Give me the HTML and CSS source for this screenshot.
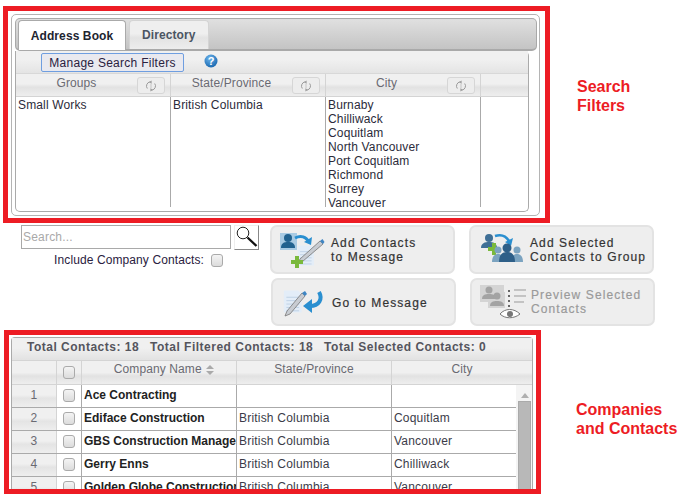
FILE: index.html
```html
<!DOCTYPE html>
<html lang="en">
<head>
<meta charset="utf-8">
<title>Contacts</title>
<link rel="stylesheet" href="styles.css">
</head>
<body>
<svg class="defs" width="0" height="0" aria-hidden="true">
  <symbol id="sync" viewBox="0 0 12 12">
    <path d="M2.300 8.500A4.200 4.200 0 0 1 5 1.900M9.700 3.500A4.200 4.200 0 0 1 7 10.100" fill="none" stroke="#999" stroke-width="1"/>
    <path d="M6.600 .4v3.400L4.200 2.100zM5.400 11.600V8.200L7.800 9.900z" fill="#999"/>
    <path d="M6 3.500v5" stroke="#bbb" stroke-width=".8"/>
  </symbol>
  <symbol id="doc" viewBox="0 0 26 28">
    <path d="M1 1h17l4 4v22H1z" fill="#e3edf8"/>
    <path d="M4 9h15M4 13h15M4 17h15M4 21h15M4 25h15" stroke="#b9cde3" stroke-width="1"/>
  </symbol>
</svg>

<div class="row-top">
  <section class="frame frame-filters">
    <div class="panel">
      <div class="tabbar">
        <button class="tab tab-on">Address Book</button>
        <button class="tab">Directory</button>
      </div>
      <div class="filters">
        <div class="toolbar">
          <button class="manage">Manage Search Filters</button>
          <svg class="help" viewBox="0 0 14 14" width="14" height="14"><defs><radialGradient id="hg" cx=".4" cy=".3" r=".8"><stop offset="0" stop-color="#6db4ec"/><stop offset="1" stop-color="#0f5fa8"/></radialGradient></defs><circle cx="7" cy="7" r="6.500" fill="url(#hg)"/><text x="7" y="11" class="help-q">?</text></svg>
        </div>
        <div class="fhead">
          <div class="fh"><span>Groups</span><button class="syncbtn"><svg width="12" height="12"><use href="#sync"/></svg></button></div>
          <div class="fh"><span>State/Province</span><button class="syncbtn"><svg width="12" height="12"><use href="#sync"/></svg></button></div>
          <div class="fh"><span>City</span><button class="syncbtn"><svg width="12" height="12"><use href="#sync"/></svg></button></div>
          <div class="fh fh-last"></div>
        </div>
        <div class="fbody">
          <ul class="flist"><li>Small Works</li></ul>
          <ul class="flist"><li>British Columbia</li></ul>
          <ul class="flist"><li>Burnaby</li><li>Chilliwack</li><li>Coquitlam</li><li>North Vancouver</li><li>Port Coquitlam</li><li>Richmond</li><li>Surrey</li><li>Vancouver</li></ul>
          <ul class="flist flist-last"></ul>
        </div>
      </div>
    </div>
  </section>
  <div class="note note-a">Search<br>Filters</div>
</div>

<div class="row-mid">
  <div class="searchcol">
    <div class="searchline">
      <input class="search" placeholder="Search...">
      <button class="searchbtn"><svg viewBox="0 0 23 23" width="23" height="23"><circle cx="8" cy="7" r="5.800" fill="#fff" stroke="#222" stroke-width="1"/><path d="M12.500 11.500l9 8.500" stroke="#111" stroke-width="2.400"/></svg></button>
    </div>
    <label class="incl">Include Company Contacts:<span class="cb cb-incl"></span></label>
  </div>
  <div class="actions">
    <button class="act">
      <svg class="ico" viewBox="0 0 46 36" width="46" height="36"><rect x="0" y="1" width="17" height="17" fill="#a9cbe3"/><circle cx="8" cy="6" r="4" fill="#21628f"/><path d="M1 16c0-5 3-6 7-6s7 1 7 6z" fill="#21628f"/><path d="M15 6c6-3 11-1 14 4" fill="none" stroke="#2a8fd0" stroke-width="3"/><path d="M32 5l-1 8-7-3z" fill="#2a8fd0"/><g transform="translate(17 12)"><use href="#doc" width="20" height="23"/></g><path d="M20 27l-2 4 4.500-1.500L43 12l-3-3z" fill="#c8ccd2" stroke="#777" stroke-width=".8"/><path d="M40 9l3 3 1.500-2-2-3z" fill="#3f86c4"/><path d="M15 24h4v4h4v4h-4v4h-4v-4h-4v-4h4z" fill="#7ab93c"/></svg>
      <span class="lbl">Add Contacts<br>to Message</span>
    </button>
    <button class="act">
      <svg class="ico" viewBox="0 0 46 36" width="46" height="36"><circle cx="10" cy="6" r="4" fill="#3f6f96"/><path d="M2 16c0-5 4-6 8-6s8 1 8 6z" fill="#3f6f96"/><path d="M16 4c6-2 11 0 14 5" fill="none" stroke="#2a8fd0" stroke-width="2.500"/><path d="M34 6l-2 8-6-4z" fill="#2a8fd0"/><path d="M13 11h4v4h4v4h-4v4h-4v-4H9v-4h4z" fill="#7ab93c"/><circle cx="19" cy="18" r="3.500" fill="#7ba3c0"/><path d="M13 30c0-6 3-8 6-8s6 2 6 8z" fill="#7ba3c0"/><circle cx="38" cy="18" r="3.500" fill="#7ba3c0"/><path d="M32 30c0-6 3-8 6-8s6 2 6 8z" fill="#7ba3c0"/><circle cx="28" cy="16" r="4.500" fill="#2e5f88"/><path d="M20 30c0-8 4-10 8-10s8 2 8 10z" fill="#2e5f88"/></svg>
      <span class="lbl">Add Selected<br>Contacts to Group</span>
    </button>
    <button class="act act-low">
      <svg class="ico" viewBox="0 0 46 36" width="46" height="36"><g transform="translate(2 3)"><use href="#doc" width="22" height="29"/></g><path d="M6 27l-2 5 5-2 15-18-3-3z" fill="#c8ccd2" stroke="#777" stroke-width=".8"/><path d="M21 9l3 3 2-2-2-3z" fill="#3f86c4"/><path d="M38 8c4 7 0 14-9 14" fill="none" stroke="#2a8fd0" stroke-width="4"/><path d="M31 15v14l-9-7z" fill="#2a8fd0"/></svg>
      <span class="lbl lbl-one">Go to Message</span>
    </button>
    <button class="act act-low act-off">
      <svg class="ico" viewBox="0 0 46 36" width="46" height="36"><rect x="0" y="1" width="24" height="17" fill="#d4d4d4"/><rect x="8" y="8" width="17" height="16" fill="#d4d4d4"/><circle cx="9" cy="6" r="3.500" fill="#a3a3a3"/><path d="M2 15c0-4 3-5 7-5s7 1 7 5z" fill="#a3a3a3"/><circle cx="17" cy="12" r="3.500" fill="#a3a3a3"/><path d="M10 22c0-4 3-5 7-5s7 1 7 5z" fill="#a3a3a3"/><path d="M29 6v2M29 11v2M29 16v2M29 21v2" stroke="#666" stroke-width="2"/><path d="M34 6h13M34 12h13M34 18h10" stroke="#999"/><path d="M20 30c5-6 14-6 20 0-6 5-15 5-20 0z" fill="#fff" stroke="#777"/><circle cx="30" cy="30" r="3" fill="#777"/></svg>
      <span class="lbl">Preview Selected<br>Contacts</span>
    </button>
  </div>
</div>

<div class="row-bot">
  <section class="frame frame-grid">
    <div class="gridwrap">
      <div class="totals">Total Contacts: 18 <i></i>Total Filtered Contacts: 18 <i></i>Total Selected Contacts: 0</div>
      <div class="ghead">
        <div class="gh"></div>
        <div class="gh"><span class="cb"></span></div>
        <div class="gh gh-co">Company Name <svg class="sort" viewBox="0 0 8 10" width="8" height="10"><path d="M4 0l4 4H0zM4 10L0 6h8z" fill="#aaa"/></svg></div>
        <div class="gh">State/Province</div>
        <div class="gh">City</div>
      </div>
      <div class="gbody">
        <div class="rows">
          <div class="gr"><div class="c c-n">1</div><div class="c c-k"><span class="cb"></span></div><div class="c c-b">Ace Contracting</div><div class="c"></div><div class="c"></div></div>
          <div class="gr"><div class="c c-n">2</div><div class="c c-k"><span class="cb"></span></div><div class="c c-b">Ediface Construction</div><div class="c">British Columbia</div><div class="c">Coquitlam</div></div>
          <div class="gr"><div class="c c-n">3</div><div class="c c-k"><span class="cb"></span></div><div class="c c-b">GBS Construction Management</div><div class="c">British Columbia</div><div class="c">Vancouver</div></div>
          <div class="gr"><div class="c c-n">4</div><div class="c c-k"><span class="cb"></span></div><div class="c c-b">Gerry Enns</div><div class="c">British Columbia</div><div class="c">Chilliwack</div></div>
          <div class="gr"><div class="c c-n">5</div><div class="c c-k"><span class="cb"></span></div><div class="c c-b">Golden Globe Construction</div><div class="c">British Columbia</div><div class="c">Vancouver</div></div>
        </div>
        <div class="scroll"><span class="arrow"></span><span class="thumb"></span></div>
      </div>
    </div>
  </section>
  <div class="note note-b">Companies<br>and Contacts</div>
</div>
</body>
</html>
```

FILE: styles.css
```css
* { box-sizing: border-box; }
html, body { margin: 0; height: 504px; overflow: hidden; background: #fff; }
body { font: 12px/14px "Liberation Sans", Arial, sans-serif; color: #222; letter-spacing: .1px; }
.defs { position: absolute; }
button { font: inherit; letter-spacing: inherit; margin: 0; }
ul { list-style: none; margin: 0; padding: 0; }

.row-top { display: flex; align-items: flex-start; padding: 6px 0 0 3px; }
.frame { border: 5px solid #ed1c24; background: #fff; }
.frame-filters { width: 547px; height: 217px; padding: 3px; flex: none; }
.note { color: #ed1c24; font-weight: 700; font-size: 16px; line-height: 19px; letter-spacing: 0; }
.note-a { margin: 71px 0 0 27px; }
.note-b { margin: 70px 0 0 35px; }

.panel { height: 202px; width: 529px; border: 1px solid #b4b4b4; border-radius: 5px; padding: 3px; }
.tabbar { height: 33px; width: 522px; display: flex; gap: 3px; align-items: flex-end; padding-left: 2px;
  border: 1px solid #a9a9a9; border-bottom-width: 2px; border-radius: 5px; background: linear-gradient(#e0e0e0, #c4c4c4); }
.tab { height: 29px; padding: 0 12px; border: 1px solid #d4d4d4; border-bottom: 0; border-radius: 4px 4px 0 0; color: #4b5563; font-weight: 700;
  background: linear-gradient(#efefef 45%, #e3e3e3 60%, #ededed); letter-spacing: .1px; }
.tab-on { width: 108px; padding: 0; background: #fff; border-color: #aaa; color: #1d2430; margin-bottom: -1px; height: 30px; }
.filters { width: 514px; height: 161px; border: 1px solid #aaa; border-top: 0; border-radius: 0 5px 5px 5px; }
.toolbar { height: 23px; display: flex; align-items: flex-start; padding-left: 25px; gap: 20px; background: linear-gradient(#f0f0f0 40%, #e4e4e4); border-bottom: 1px solid #d8d8d8; }
.manage { width: 143px; height: 19px; padding: 0; margin-top: 2px; border: 1px solid #6f9ee0; background: #e9e9ef; color: #2a2140; border-radius: 2px; letter-spacing: .27px; }
.help { margin-top: 3px; }
.help-q { font-size: 11px; font-weight: 700; fill: #fff; text-anchor: middle; letter-spacing: 0; }
.fhead { display: grid; grid-template-columns: 155px 155px 155px 1fr; height: 23px; background: linear-gradient(#f0f0f0 45%, #e2e2e2 60%, #eee); border-bottom: 1px solid #d4d4d4; }
.fh { color: #6a6a72; border-right: 1px solid #d4d4d4; padding: 2px 0 0 0; display: flex; }
.fh span { flex: 1; text-align: center; }
.fh-last { border: 0; }
.syncbtn { width: 28px; height: 17px; margin: 1px 5px 0 0; padding: 0; border: 1px solid #d6d6d6; border-radius: 3px; background: #ededed; display: flex; align-items: center; justify-content: center; flex: none; }
.fbody { display: grid; grid-template-columns: 155px 155px 155px 1fr; grid-template-rows: 110px; height: 110px; letter-spacing: .15px; }
.flist { height: 110px; border-right: 1px solid #aaa; padding: 1px 0 0 2px; color: #2b2b3a; }
.flist-last { border: 0; }
.flist li { height: 14px; }

.row-mid { display: flex; padding: 2px 0 0 21px; height: 107px; }
.searchcol { width: 249px; flex: none; }
.searchline { display: flex; align-items: flex-start; gap: 3px; }
.search { width: 210px; height: 24px; border: 1px solid #a9a9a9; padding: 0 1px; font: inherit; letter-spacing: .2px; background: #fff; }
.search::placeholder { color: #a9a9a9; opacity: 1; }
.searchbtn { width: 25px; height: 25px; padding: 0; border: 1px solid; border-color: #eee #888 #888 #eee; background: #fff; display: flex; }
.incl { display: flex; justify-content: flex-end; align-items: center; gap: 7px; margin: 3px 0 0; height: 14px; padding-right: 47px; color: #2a2140; }
.cb { display: inline-block; width: 12px; height: 13px; border: 1px solid #aaa; border-radius: 3px; background: linear-gradient(#f4f4f4, #dcdcdc); }
.actions { display: grid; grid-template-columns: 185px 185px; grid-template-rows: 49px 48px; column-gap: 14px; row-gap: 4px; }
.act { display: flex; align-items: center; gap: 5px; padding: 0 0 0 8px; border: 2px solid #e3e3e3; border-radius: 7px; background: #eee; color: #333; text-align: left; letter-spacing: 1.1px; line-height: 14px; -webkit-text-stroke: .2px #333; }
.act-low { margin: 0 -1px 0 1px; }
.lbl-one { margin-top: 2px; }
.act-off { color: #9a9a9a; -webkit-text-stroke: .2px #9a9a9a; }
.ico { flex: none; }

.row-bot { display: flex; align-items: flex-start; padding: 0 0 0 4px; }
.frame-grid { width: 537px; height: 164px; padding: 2px 3px 0 2px; overflow: hidden; flex: none; }
.gridwrap { height: 170px; border: 1px solid #aaa; border-bottom: 0; border-radius: 4px 4px 0 0; }
.totals { height: 23px; padding: 1px 0 0 15px; font-weight: 700; color: #55555d; line-height: 16px; background: linear-gradient(#f0f0f0 45%, #e2e2e2); border-bottom: 1px solid #d4d4d4; letter-spacing: .5px; white-space: nowrap; }
.totals i { display: inline-block; width: 7px; }
.ghead { display: grid; grid-template-columns: 45px 25px 155px 155px 1fr; height: 24px; background: linear-gradient(#f0f0f0 50%, #e2e2e2 65%, #eee); border-bottom: 1px solid #d4d4d4; }
.gh { border-right: 1px solid #d4d4d4; text-align: center; color: #6a6a72; padding-top: 1px; white-space: nowrap; }
.gh:nth-child(2) { padding-top: 5px; }
.gh-co { padding-left: 10px; }
.gh:last-child { border: 0; }
.sort { vertical-align: -2px; margin-left: 1px; }
.gbody { display: flex; }
.rows { width: 504px; flex: none; }
.gr { display: grid; grid-template-columns: 45px 25px 155px 155px 1fr; height: 23px; border-bottom: 1px solid #aaa; color: #3b3b48; letter-spacing: .2px; }
.c { border-right: 1px solid #aaa; padding: 3px 0 0 2px; white-space: nowrap; overflow: hidden; line-height: 15px; }
.c:last-child { border: 0; }
.c-n { text-align: center; color: #6a6a72; border-right-color: #d4d4d4; background: linear-gradient(#f0f0f0 45%, #e4e4e4 60%, #eee); padding: 3px 0 0; }
.c-k { text-align: center; padding: 4px 0 0; }
.c-b { font-weight: 700; color: #222; letter-spacing: 0; }
.scroll { flex: 1; padding: 8px 1px 0 2px; display: flex; flex-direction: column; align-items: stretch; gap: 3px; background: #f4f4f4; }
.arrow { align-self: center; width: 0; height: 0; border: 4px solid transparent; border-top: 0; border-bottom: 5px solid #b0b0b0; }
.thumb { height: 120px; background: #b8b8b8; border: 1px solid #aaa; }
```
